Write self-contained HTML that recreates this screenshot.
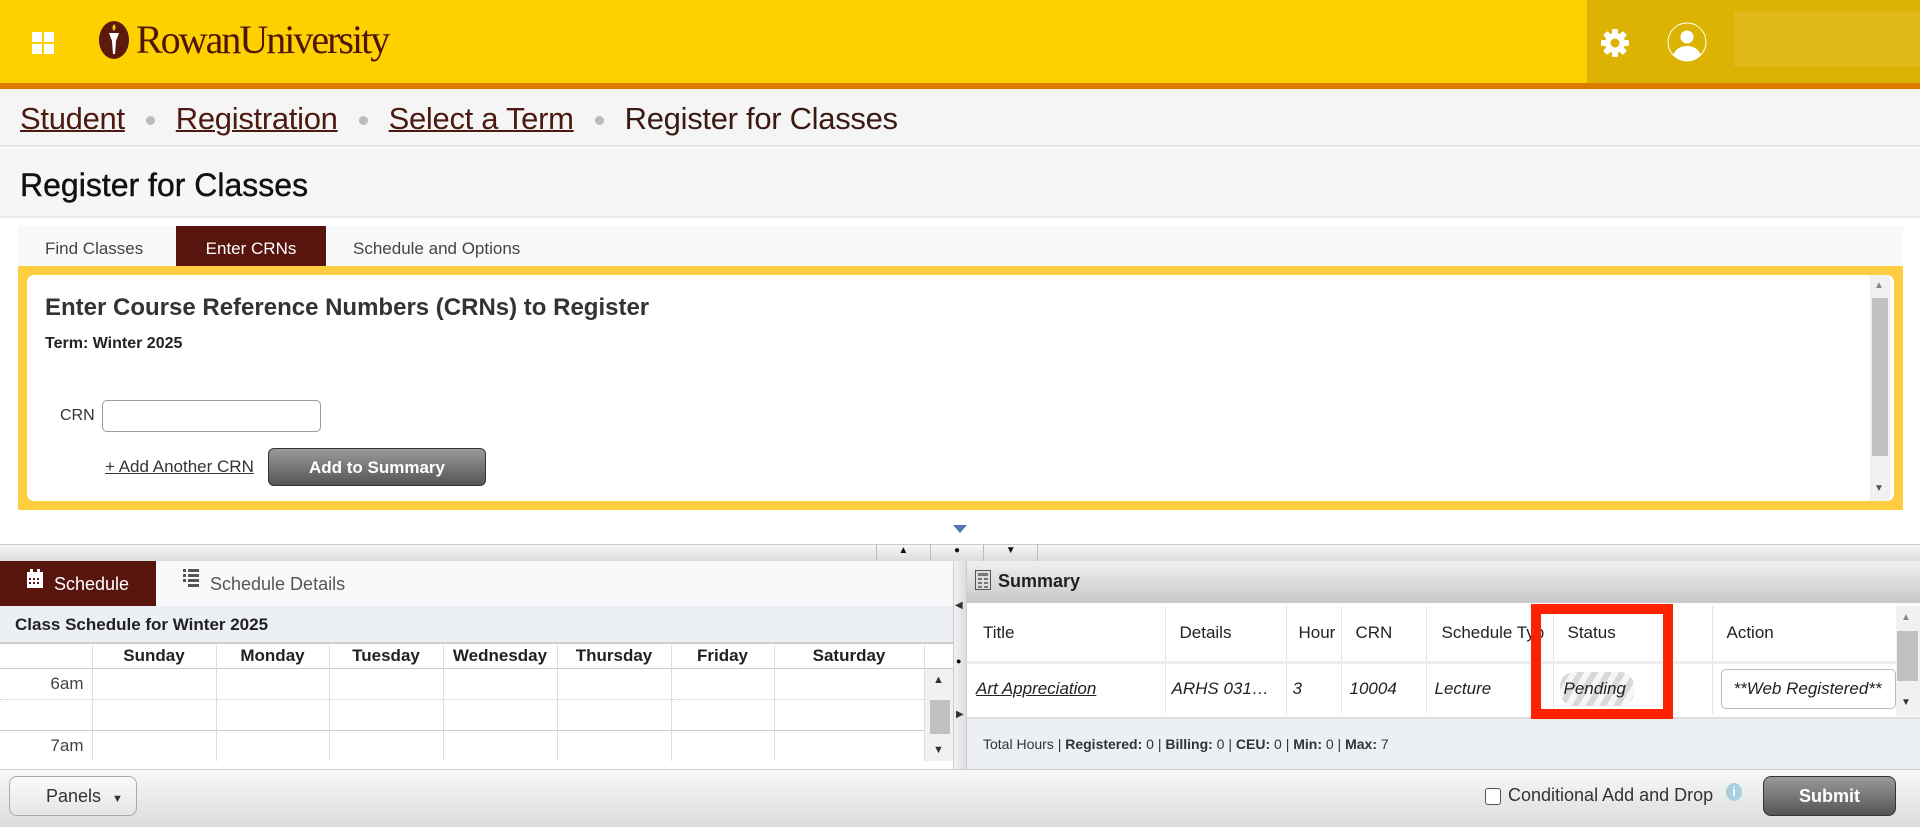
<!DOCTYPE html>
<html><head><meta charset="utf-8"><style>
*{box-sizing:border-box;margin:0;padding:0}
body{width:1920px;height:827px;overflow:hidden;background:#fff;font-family:"Liberation Sans",Arial,sans-serif;position:relative;color:#333}
.a{position:absolute}
.hdr{left:0;top:0;width:1920px;height:83px;background:#ffd000}
.hdr2{left:1587px;top:0;width:333px;height:83px;background:#dcb303}
.org{left:0;top:83px;width:1920px;height:6px;background:#df7a00}
.bc{left:0;top:89px;width:1920px;height:58px;background:#f5f5f5;border-bottom:2px solid #e6e6e6;font-size:31px;color:#3a1a12;padding:12px 0 0 20px;white-space:nowrap;letter-spacing:-0.3px}
.bc a{color:#4c1a10;text-decoration:underline;text-decoration-thickness:2px}
.bc .d{display:inline-block;width:9px;height:9px;border-radius:50%;background:#bbb;margin:0 21px 4px 21px}
.tt{left:0;top:149px;width:1920px;height:69px;background:#f6f6f6;border-bottom:2px solid #e8e8e8;font-size:32px;color:#111;padding:18px 0 0 20px;-webkit-text-stroke:0.4px #111}
th,td{font-weight:normal}
.cal td{border-right:1px solid #ddd}
</style></head><body>
<div class="a hdr"></div><div class="a hdr2"></div>
<div class="a" style="left:1734px;top:12px;width:186px;height:55px;background:#dfb819"></div>
<div class="a org"></div>
<div class="a" style="left:32px;top:32px;width:10px;height:10px;background:#fff"></div>
<div class="a" style="left:44px;top:32px;width:10px;height:10px;background:#fff"></div>
<div class="a" style="left:32px;top:44px;width:10px;height:10px;background:#fff"></div>
<div class="a" style="left:44px;top:44px;width:10px;height:10px;background:#fff"></div>
<svg class="a" style="left:98px;top:20px" width="34" height="40" viewBox="0 0 34 40"><ellipse cx="16" cy="20" rx="15" ry="19" fill="#5a1a0d"/><path d="M11 13 L21 13 L18 21 L17 34 L15 34 L14 21 Z" fill="#fff"/><path d="M16 4 q3 3 0 7 q-3 -3 0 -7" fill="#ffd000"/></svg>
<div class="a" style="left:136px;top:16px;font-family:'Liberation Serif',serif;font-size:40px;color:#4e1608;letter-spacing:-2px">RowanUniversity</div>
<svg class="a" style="left:1599px;top:27px" width="32" height="32" viewBox="0 0 32 32"><g fill="#fff"><circle cx="16" cy="16" r="10"/><rect x="13" y="2" width="6" height="28" rx="1.5"/><rect x="2" y="13" width="28" height="6" rx="1.5"/><rect x="13" y="2" width="6" height="28" rx="1.5" transform="rotate(45 16 16)"/><rect x="13" y="2" width="6" height="28" rx="1.5" transform="rotate(-45 16 16)"/></g><circle cx="16" cy="16" r="4.5" fill="#dcb303"/></svg>
<svg class="a" style="left:1667px;top:22px" width="40" height="40" viewBox="0 0 40 40"><circle cx="20" cy="20" r="19" fill="none" stroke="#fff" stroke-width="1"/><circle cx="20" cy="15" r="6.5" fill="#fff"/><path d="M6 33 Q10 24 20 24 Q30 24 34 33 Q28 39 20 39 Q12 39 6 33Z" fill="#fff"/></svg>
<div class="a bc"><a>Student</a><span class="d"></span><a>Registration</a><span class="d"></span><a>Select a Term</a><span class="d"></span>Register for Classes</div>
<div class="a tt">Register for Classes</div>
<div class="a" style="left:18px;top:226px;width:1885px;height:40px;background:#f8f9fa"></div>
<div class="a" style="left:45px;top:239px;font-size:17px;color:#444">Find Classes</div>
<div class="a" style="left:176px;top:226px;width:150px;height:40px;background:#57150e;color:#fff;font-size:17px;text-align:center;padding-top:13px">Enter CRNs</div>
<div class="a" style="left:353px;top:239px;font-size:17px;color:#444">Schedule and Options</div>
<div class="a" style="left:18px;top:266px;width:1885px;height:244px;background:#fecd40"></div>
<div class="a" style="left:27px;top:275px;width:1867px;height:226px;background:#fff;border-radius:7px"></div>
<div class="a" style="left:1870px;top:275px;width:20px;height:226px;background:#f1f1f1"></div>
<div class="a" style="left:1872px;top:298px;width:16px;height:158px;background:#c1c1c1"></div>
<div class="a" style="left:1874px;top:280px;font-size:10px;color:#888">▲</div>
<div class="a" style="left:1874px;top:483px;font-size:10px;color:#555">▼</div>
<div class="a" style="left:45px;top:294px;font-size:24px;font-weight:bold;color:#333">Enter Course Reference Numbers (CRNs) to Register</div>
<div class="a" style="left:45px;top:335px;font-size:16px;font-weight:bold;color:#222">Term: Winter 2025</div>
<div class="a" style="left:60px;top:407px;font-size:16px;color:#333">CRN</div>
<div class="a" style="left:102px;top:400px;width:219px;height:32px;border:1px solid #999;border-radius:5px"></div>
<div class="a" style="left:105px;top:457px;font-size:17px;color:#333;text-decoration:underline">+ Add Another CRN</div>
<div class="a" style="left:268px;top:448px;width:218px;height:38px;border:1px solid #333;border-radius:6px;background:linear-gradient(#9a9a9a,#555);color:#fff;font-weight:bold;font-size:17px;text-align:center;padding-top:9px">Add to Summary</div>
<div class="a" style="left:953px;top:525px;width:0;height:0;border-left:7px solid transparent;border-right:7px solid transparent;border-top:8px solid #4a78ac"></div>
<div class="a" style="left:0;top:544px;width:1920px;height:17px;background:linear-gradient(#f6f6f6,#dcdcdc);border-top:1px solid #ccc"></div>
<div class="a" style="left:876px;top:545px;width:162px;height:16px;display:flex;font-size:10px;color:#111">
<div style="flex:1;border-left:1px solid #bbb;text-align:center">▲</div><div style="flex:1;border-left:1px solid #bbb;text-align:center">●</div><div style="flex:1;border-left:1px solid #bbb;border-right:1px solid #bbb;text-align:center">▼</div></div>
<div class="a" style="left:0;top:561px;width:953px;height:45px;background:#f8f9fb"></div>
<div class="a" style="left:0;top:561px;width:156px;height:45px;background:#57150e;color:#fff;font-size:18px;padding:13px 0 0 54px">Schedule</div>
<svg class="a" style="left:26px;top:569px" width="18" height="20"><rect x="1" y="3" width="16" height="16" fill="#fff"/><rect x="4" y="0" width="3" height="5" fill="#fff"/><rect x="11" y="0" width="3" height="5" fill="#fff"/><g fill="#57150e"><rect x="3" y="9" width="2" height="2"/><rect x="7" y="9" width="2" height="2"/><rect x="11" y="9" width="2" height="2"/><rect x="3" y="13" width="2" height="2"/><rect x="7" y="13" width="2" height="2"/><rect x="11" y="13" width="2" height="2"/></g></svg>
<svg class="a" style="left:183px;top:569px" width="16" height="18" fill="#555"><rect x="0" y="0" width="3" height="3"/><rect x="5" y="0" width="11" height="3"/><rect x="0" y="5" width="3" height="3"/><rect x="5" y="5" width="11" height="3"/><rect x="0" y="10" width="3" height="3"/><rect x="5" y="10" width="11" height="3"/><rect x="5" y="15" width="11" height="3"/></svg>
<div class="a" style="left:210px;top:574px;font-size:18px;color:#555">Schedule Details</div>
<div class="a" style="left:0;top:606px;width:953px;height:38px;background:#eceff3;border-bottom:2px solid #ccc;font-size:17px;font-weight:bold;color:#222;padding:9px 0 0 15px">Class Schedule for Winter 2025</div>
<table class="a cal" style="left:0;top:645px;width:953px;border-collapse:collapse;font-size:17px;table-layout:fixed">
<colgroup><col style="width:92px"><col style="width:124px"><col style="width:113px"><col style="width:114px"><col style="width:114px"><col style="width:114px"><col style="width:103px"><col style="width:150px"><col style="width:29px"></colgroup>
<tr style="height:23px;font-weight:bold;color:#222;text-align:center;border-bottom:1px solid #ccc"><td></td><td><b>Sunday</b></td><td><b>Monday</b></td><td><b>Tuesday</b></td><td><b>Wednesday</b></td><td><b>Thursday</b></td><td><b>Friday</b></td><td><b>Saturday</b></td><td style="border:none"></td></tr>
<tr style="height:31px;border-bottom:1px dotted #ccc"><td style="text-align:right;padding-right:8px;color:#444">6am</td><td></td><td></td><td></td><td></td><td></td><td></td><td></td><td style="background:#f1f1f1;border:none" rowspan="3"></td></tr>
<tr style="height:31px;border-bottom:1px solid #ccc"><td></td><td></td><td></td><td></td><td></td><td></td><td></td><td></td></tr>
<tr style="height:31px"><td style="text-align:right;padding-right:8px;color:#444">7am</td><td></td><td></td><td></td><td></td><td></td><td></td><td></td></tr>
</table>
<div class="a" style="left:930px;top:700px;width:20px;height:34px;background:#c1c1c1"></div>
<div class="a" style="left:933px;top:674px;font-size:11px;color:#333">▲</div>
<div class="a" style="left:933px;top:744px;font-size:11px;color:#333">▼</div>
<div class="a" style="left:953px;top:561px;width:14px;height:208px;background:linear-gradient(90deg,#f2f2f2,#ddd);border-left:1px solid #ccc;border-right:1px solid #ccc"></div>
<div class="a" style="left:955px;top:600px;font-size:10px;color:#333">◀</div>
<div class="a" style="left:956px;top:656px;font-size:9px;color:#000">●</div>
<div class="a" style="left:956px;top:709px;font-size:10px;color:#333">▶</div>
<div class="a" style="left:967px;top:561px;width:953px;height:42px;background:linear-gradient(#f0f0f0,#c8c8c8)"></div>
<svg class="a" style="left:975px;top:570px" width="16" height="20"><rect x="0.5" y="0.5" width="15" height="19" fill="#ddd" stroke="#555"/><rect x="3" y="3" width="10" height="3" fill="#777"/><g fill="#777"><rect x="3" y="8" width="4" height="2"/><rect x="9" y="8" width="4" height="2"/><rect x="3" y="12" width="4" height="2"/><rect x="9" y="12" width="4" height="2"/><rect x="3" y="16" width="4" height="2"/><rect x="9" y="16" width="4" height="2"/></g></svg>
<div class="a" style="left:998px;top:571px;font-size:18px;font-weight:bold;color:#222">Summary</div>
<table class="a" style="left:967px;top:606px;width:929px;border-collapse:collapse;font-size:17px;table-layout:fixed;color:#222">
<colgroup><col style="width:198px"><col style="width:121px"><col style="width:55px"><col style="width:85px"><col style="width:127px"><col style="width:159px"><col style="width:184px"></colgroup>
<tr style="height:56px;border-bottom:3px solid #eee"><td style="padding-left:16px;border-right:1px solid #e5e5e5">Title</td><td style="padding-left:14px;border-right:1px solid #e5e5e5">Details</td><td style="padding-left:12px;border-right:1px solid #e5e5e5;overflow:hidden;white-space:nowrap">Hour</td><td style="padding-left:14px;border-right:1px solid #e5e5e5">CRN</td><td style="padding-left:15px;border-right:1px solid #e5e5e5;overflow:hidden;white-space:nowrap">Schedule Typ</td><td style="padding-left:14px;border-right:1px solid #e5e5e5">Status</td><td style="padding-left:14px">Action</td></tr>
<tr style="height:52px;font-style:italic"><td style="padding-left:9px;border-right:1px solid #e5e5e5;text-decoration:underline">Art Appreciation</td><td style="padding-left:6px;border-right:1px solid #e5e5e5;white-space:nowrap">ARHS 031…</td><td style="padding-left:6px;border-right:1px solid #e5e5e5">3</td><td style="padding-left:8px;border-right:1px solid #e5e5e5">10004</td><td style="padding-left:8px;border-right:1px solid #e5e5e5">Lecture</td><td style="padding-left:6px;border-right:1px solid #e5e5e5"><div style="width:74px;height:34px;line-height:34px;padding-left:4px;border-radius:14px;background:repeating-linear-gradient(-60deg,#d8d8d8 0 6px,#f6f6f6 6px 12px)">Pending</div></td><td style="padding-left:8px"><div style="border:1px solid #bbb;border-radius:5px;height:40px;padding:9px 0 0 12px;white-space:nowrap;overflow:hidden">**Web Registered**</div></td></tr>
</table>
<div class="a" style="left:1896px;top:606px;width:24px;height:110px;background:#f1f1f1"></div>
<div class="a" style="left:1897px;top:631px;width:21px;height:50px;background:#c1c1c1"></div>
<div class="a" style="left:1901px;top:612px;font-size:10px;color:#888">▲</div>
<div class="a" style="left:1901px;top:697px;font-size:10px;color:#333">▼</div>
<div class="a" style="left:967px;top:717px;width:953px;height:52px;background:#eceff3;border-top:2px solid #ddd;font-size:14px;color:#333;padding:17px 0 0 16px">Total Hours | <b>Registered:</b> 0 | <b>Billing:</b> 0 | <b>CEU:</b> 0 | <b>Min:</b> 0 | <b>Max:</b> 7</div>
<div class="a" style="left:1531px;top:604px;width:142px;height:115px;border:10px solid #ff2200"></div>
<div class="a" style="left:0;top:769px;width:1920px;height:58px;background:linear-gradient(#f8f8f8,#dcdcdc);border-top:1px solid #ccc"></div>
<div class="a" style="left:9px;top:776px;width:128px;height:40px;border:1px solid #aaa;border-radius:8px;background:linear-gradient(#fafafa,#e6e6e6);font-size:18px;color:#333;padding:9px 0 0 36px">Panels <span style="font-size:11px;margin-left:6px">▼</span></div>
<div class="a" style="left:1485px;top:788px;width:16px;height:17px;border:1px solid #555;border-radius:3px;background:#fff"></div>
<div class="a" style="left:1508px;top:785px;font-size:18px;color:#333">Conditional Add and Drop</div>
<div class="a" style="left:1726px;top:783px;width:16px;height:18px;border-radius:50%;background:#a7cfe0;color:#fff;font-size:13px;font-weight:bold;text-align:center;line-height:18px">i</div>
<div class="a" style="left:1763px;top:776px;width:133px;height:40px;border:1px solid #333;border-radius:8px;background:linear-gradient(#9a9a9a,#555);color:#fff;font-weight:bold;font-size:18px;text-align:center;padding-top:9px">Submit</div>
</body></html>
